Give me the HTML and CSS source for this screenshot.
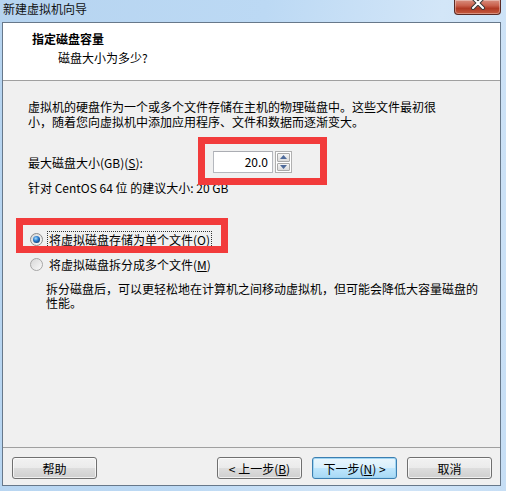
FILE: index.html
```html
<!DOCTYPE html>
<html>
<head>
    <meta charset="UTF-8">
    <title>新建虚拟机向导</title>
    <link rel="stylesheet" href="styles.css">
</head>
<body>
<div class="window">
    <div class="titlebar">
        <span class="title">新建虚拟机向导</span>
        <span class="close-btn">
            <svg width="18" height="10" viewBox="0 0 18 10">
                <path d="M4 -2 L14 8 M14 -2 L4 8" stroke="#3b3b3b" stroke-width="4" stroke-linecap="round"/>
                <path d="M4 -2 L14 8 M14 -2 L4 8" stroke="#ffffff" stroke-width="2" stroke-linecap="round"/>
            </svg>
        </span>
    </div>

    <div class="client">
        <div class="header">
            <div class="header-title">指定磁盘容量</div>
            <div class="header-sub">磁盘大小为多少?</div>
        </div>

        <div class="content">
            <p class="intro">虚拟机的硬盘作为一个或多个文件存储在主机的物理磁盘中。这些文件最初很<br>小，随着您向虚拟机中添加应用程序、文件和数据而逐渐变大。</p>

            <div class="size-row">
                <label class="size-label">最大磁盘大小(GB)(<u>S</u>):</label>
                <div class="spin">
                    <div class="spin-field">20.0</div>
                    <div class="spin-buttons">
                        <div class="spin-btn">
                            <svg width="7" height="4" viewBox="0 0 7 4"><path d="M0 4 L3.5 0 L7 4 Z" fill="#4e6a9a"/></svg>
                        </div>
                        <div class="spin-btn">
                            <svg width="7" height="4" viewBox="0 0 7 4"><path d="M0 0 L7 0 L3.5 4 Z" fill="#4e6a9a"/></svg>
                        </div>
                    </div>
                </div>
            </div>

            <p class="hint">针对 CentOS 64 位 的建议大小: 20 GB</p>

            <div class="radio-row first">
                <svg class="radio" width="13" height="13" viewBox="0 0 13 13">
                    <defs>
                        <linearGradient id="rbg" x1="0" y1="0" x2="1" y2="1">
                            <stop offset="0" stop-color="#d6d6d6"/>
                            <stop offset="1" stop-color="#fbfbfb"/>
                        </linearGradient>
                        <radialGradient id="dot" cx="0.4" cy="0.35" r="0.7">
                            <stop offset="0" stop-color="#a9dbfa"/>
                            <stop offset="0.5" stop-color="#2c7fd0"/>
                            <stop offset="1" stop-color="#0d3d7a"/>
                        </radialGradient>
                    </defs>
                    <circle cx="6.5" cy="6.5" r="6" fill="url(#rbg)" stroke="#8b8b8b"/>
                    <circle cx="6.5" cy="6.5" r="3.5" fill="url(#dot)"/>
                </svg>
                <span class="radio-label focused">将虚拟磁盘存储为单个文件(<u>O</u>)</span>
            </div>

            <div class="radio-row">
                <svg class="radio" width="13" height="13" viewBox="0 0 13 13">
                    <circle cx="6.5" cy="6.5" r="6" fill="url(#rbg)" stroke="#a6a6a6"/>
                </svg>
                <span class="radio-label">将虚拟磁盘拆分成多个文件(<u>M</u>)</span>
            </div>

            <p class="desc">拆分磁盘后，可以更轻松地在计算机之间移动虚拟机，但可能会降低大容量磁盘的<br>性能。</p>
        </div>

        <div class="footer">
            <button class="btn">帮助</button>
            <div class="nav-buttons">
                <button class="btn">&lt; 上一步(<u>B</u>)</button>
                <button class="btn default">下一步(<u>N</u>) &gt;</button>
                <button class="btn">取消</button>
            </div>
        </div>
    </div>

    <!-- red annotation boxes drawn over the screenshot -->
    <div class="mark mark-size"></div>
    <div class="mark mark-single"></div>
</div>
</body>
</html>
```

FILE: styles.css
```css
* {
    box-sizing: border-box;
}

body {
    margin: 0;
    font-family: "Noto Sans CJK SC", "Noto Sans", sans-serif;
    font-size: 12px;
    color: #000;
}

.window {
    position: relative;
    width: 506px;
    height: 491px;
    padding: 0 5px 5px 2px;
    display: flex;
    flex-direction: column;
    background: linear-gradient(100deg, #b6d4f0 0%, #bcd9f4 45%, #d3e6f8 75%, #c6def5 100%);
    overflow: hidden;
}

.titlebar {
    height: 22px;
    display: flex;
    align-items: flex-start;
}

.title {
    padding-left: 1px;
    line-height: 18px;
    color: #111;
}

.close-btn {
    margin-left: auto;
    width: 47px;
    height: 15px;
    display: flex;
    justify-content: center;
    align-items: flex-start;
    border: 1px solid #5a2a24;
    border-top: none;
    border-radius: 0 0 4px 4px;
    background: linear-gradient(#d88f7f 0%, #c9604c 40%, #b03a24 60%, #c55a3f 100%);
    box-shadow: inset 0 0 0 1px rgba(255, 255, 255, 0.35);
}

.client {
    flex: 1;
    display: flex;
    flex-direction: column;
    border: 1px solid #67788a;
    background-color: #f0f0f0;
}

.header {
    height: 58px;
    background-color: #fff;
    border-bottom: 1px solid #a0a0a0;
    padding: 8px 0 0 29px;
}

.header-title {
    font-weight: bold;
    line-height: 16px;
}

.header-sub {
    margin-top: 3px;
    padding-left: 26px;
    line-height: 16px;
}

.content {
    padding: 18px 0 0 25px;
}

.intro {
    margin: 0;
    line-height: 15px;
    white-space: nowrap;
}

.size-row {
    display: flex;
    align-items: center;
    margin-top: 22px;
    height: 22px;
}

.size-label {
    width: 185px;
}

.spin {
    display: flex;
    height: 22px;
}

.spin-field {
    width: 60px;
    height: 22px;
    border: 1px solid #b5b8be;
    border-top-color: #abadb3;
    background: #fff;
    text-align: right;
    padding-right: 4px;
    line-height: 20px;
}

.spin-buttons {
    margin-left: 2px;
    width: 17px;
    display: flex;
    flex-direction: column;
    gap: 1px;
    padding: 1px;
    border: 1px solid #b0b0b0;
    background: #fff;
}

.spin-btn {
    flex: 1;
    display: flex;
    align-items: center;
    justify-content: center;
    border: 1px solid #a9a9a9;
    border-radius: 1px;
    background: linear-gradient(#f4f4f4, #dcdcdc);
}

.hint {
    margin: 7px 0 0 0;
    line-height: 15px;
}

.radio-row {
    display: flex;
    align-items: center;
    height: 17px;
    margin-top: 8px;
    padding-left: 2px;
}

.radio-row.first {
    margin-top: 36px;
}

.radio {
    flex: none;
    margin-right: 4px;
}

.radio-label {
    padding: 0 1px;
    line-height: 15px;
    border: 1px solid transparent;
}

.radio-label.focused {
    border: 1px dotted #333;
}

.desc {
    margin: 9px 0 0 18px;
    line-height: 14px;
    white-space: nowrap;
}

.footer {
    margin-top: auto;
    border-top: 1px solid #a0a0a0;
    padding: 9px 8px 6px 9px;
    display: flex;
}

.nav-buttons {
    margin-left: auto;
    display: flex;
    gap: 10px;
}

.btn {
    width: 85px;
    height: 22px;
    padding: 0;
    font-family: inherit;
    font-size: 12px;
    color: #000;
    border: 1px solid #707070;
    border-radius: 3px;
    background: linear-gradient(#f2f2f2 0%, #ebebeb 48%, #dddddd 52%, #cfcfcf 100%);
    box-shadow: inset 0 0 0 1px rgba(255, 255, 255, 0.7);
}

.btn.default {
    border-color: #3c7fb1;
    background: linear-gradient(#eaf6fd 0%, #d9f0fc 48%, #bee6fd 52%, #a7d9f5 100%);
    box-shadow: inset 0 0 0 1px #9fd5f3;
}

.mark {
    position: absolute;
    border: 7px solid #f23b3b;
}

.mark-size {
    left: 198px;
    top: 137px;
    width: 129px;
    height: 48px;
}

.mark-single {
    left: 16px;
    top: 218px;
    width: 212px;
    height: 35px;
}
```
